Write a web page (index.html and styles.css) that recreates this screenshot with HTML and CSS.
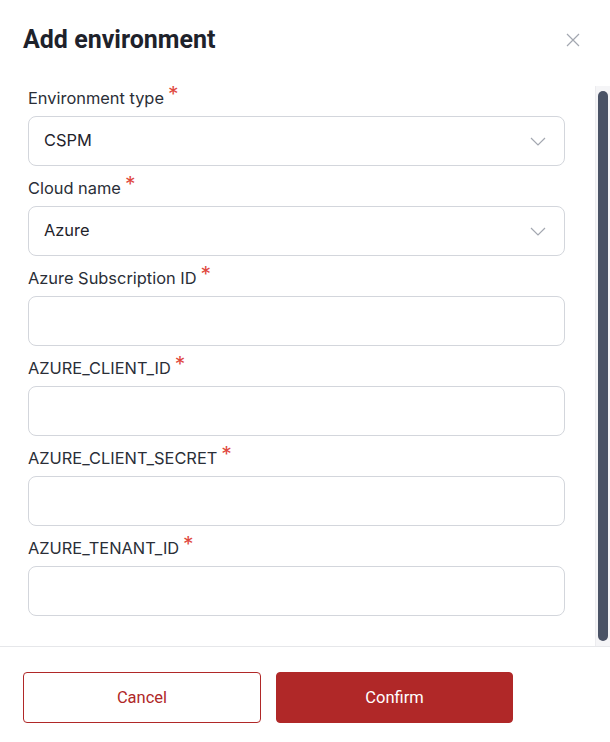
FILE: index.html
```html
<!DOCTYPE html>
<html>
<head>
<meta charset="utf-8">
<link rel="stylesheet" href="styles.css">
</head>
<body>
<div class="modal">
  <header class="header">
    <h1 class="title">Add environment</h1>
    <button class="close" aria-label="Close">
      <svg width="14" height="14" viewBox="0 0 14 14"><path d="M1 1L13 13M13 1L1 13" stroke="#a3a7b0" stroke-width="1.2" fill="none"/></svg>
    </button>
  </header>
  <div class="body">
    <div class="form">
      <div class="field">
        <label class="label">Environment type<span class="req">*</span></label>
        <div class="input select"><span>CSPM</span>
          <svg class="chev" width="16" height="9" viewBox="0 0 16 9"><path d="M1 1L8 8L15 1" stroke="#a3a7b0" stroke-width="1.2" fill="none"/></svg>
        </div>
      </div>
      <div class="field">
        <label class="label">Cloud name<span class="req">*</span></label>
        <div class="input select"><span>Azure</span>
          <svg class="chev" width="16" height="9" viewBox="0 0 16 9"><path d="M1 1L8 8L15 1" stroke="#a3a7b0" stroke-width="1.2" fill="none"/></svg>
        </div>
      </div>
      <div class="field">
        <label class="label">Azure Subscription ID<span class="req">*</span></label>
        <div class="input"></div>
      </div>
      <div class="field">
        <label class="label">AZURE_CLIENT_ID<span class="req">*</span></label>
        <div class="input"></div>
      </div>
      <div class="field">
        <label class="label">AZURE_CLIENT_SECRET<span class="req">*</span></label>
        <div class="input"></div>
      </div>
      <div class="field">
        <label class="label">AZURE_TENANT_ID<span class="req">*</span></label>
        <div class="input"></div>
      </div>
    </div>
    <div class="scrolltrack"><div class="thumb"></div></div>
  </div>
  <footer class="footer">
    <button class="btn btn-outline">Cancel</button>
    <button class="btn btn-primary">Confirm</button>
  </footer>
</div>
</body>
</html>
```
FILE: styles.css
```css
* { box-sizing: border-box; }
html, body { margin: 0; padding: 0; background: #fff; }
body { font-family: Inter, "Liberation Sans", sans-serif; color: #23272f; width: 610px; height: 742px; overflow: hidden; }
.modal { display: flex; flex-direction: column; width: 610px; height: 742px; }
.header { height: 86px; display: flex; align-items: flex-start; justify-content: space-between; padding: 24px 30px 0 23px; }
.title { margin: 0; font-family: Roboto, "Liberation Sans", sans-serif; font-weight: 700; font-size: 25px; line-height: 32px; color: #1e222b; }
.close { border: 0; background: none; padding: 0; width: 14px; height: 14px; margin-top: 9px; display: flex; }
.body { display: flex; height: 560px; }
.form { flex: 1; padding-left: 28px; padding-right: 30px; display: flex; flex-direction: column; gap: 10px; }
.field { display: flex; flex-direction: column; }
.label { font-size: 16.4px; line-height: 24px; margin-bottom: 6px; color: #2a2e37; display: flex; align-items: flex-start; }
.req { color: #e0483e; font-size: 21px; line-height: 19px; margin-left: 4px; margin-top: -1px; }
.input { height: 50px; border: 1px solid #d3d6dc; border-radius: 8px; display: flex; align-items: center; justify-content: space-between; padding: 0 18px 0 15px; font-size: 16.4px; color: #1f232b; }
.input span { margin-top: -2px; }
.chev { display: block; }
.scrolltrack { width: 15px; background: #f5f5f7; border-left: 1px solid #ececef; padding: 5px 2px 5px 2px; display: flex; }
.thumb { width: 10px; flex: 1; background: #4a5366; border-radius: 5px; }
.footer { border-top: 1px solid #e6e7ea; display: flex; gap: 15px; padding: 25px 0 0 23px; }
.btn { width: 238px; height: 51px; border-radius: 4px; font-family: Roboto, "Liberation Sans", sans-serif; font-size: 16.5px; font-weight: 400; cursor: pointer; }
.btn-outline { background: #fff; border: 1px solid #b02828; color: #b02828; }
.btn-primary { background: #b02828; border: 1px solid #b02828; color: #fff; width: 237px; }
```
